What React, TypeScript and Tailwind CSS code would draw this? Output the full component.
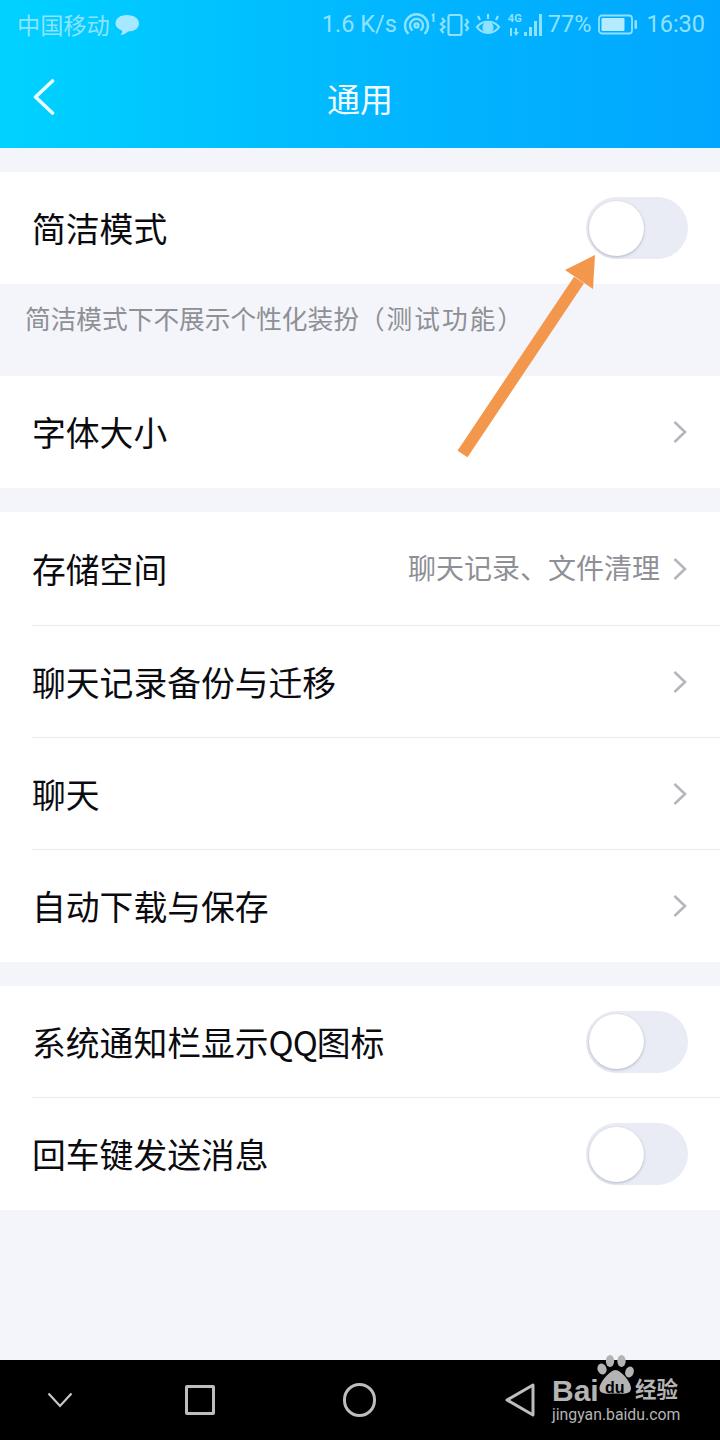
import React from "react";

function Chevron() {
  return (
    <svg width="16" height="26" viewBox="0 0 16 26" className="ml-[12px] shrink-0">
      <path d="M2.5 3 L13 13 L2.5 23" fill="none" stroke="#b4b6bd" strokeWidth="2.6" />
    </svg>
  );
}

function Toggle() {
  return (
    <div className="w-[102px] h-[62px] rounded-full bg-[#e9ecf5] flex items-center pl-[3px] shrink-0">
      <div className="w-[55px] h-[55px] rounded-full bg-white shadow-[0_1px_3px_rgba(90,95,120,0.4)]" />
    </div>
  );
}

function Row({ label, value, toggle, divider, tall }: { label: React.ReactNode; value?: string; toggle?: boolean; divider?: boolean; tall?: boolean }) {
  return (
    <div className="pl-[32px]">
      <div className={`${tall ? "h-[114px]" : "h-[112px]"} flex items-center justify-between pr-[32px] ${divider ? "border-b border-[#e9e9ee]" : ""}`}>
        <span className="text-[33.8px] text-[#0b0b0f] leading-none whitespace-nowrap">{label}</span>
        {toggle ? (
          <Toggle />
        ) : (
          <div className="flex items-center">
            {value && <span className="text-[28px] text-[#8e9096] leading-none whitespace-nowrap mb-[3px]">{value}</span>}
            <Chevron />
          </div>
        )}
      </div>
    </div>
  );
}

function StatusBar() {
  return (
    <div className="h-[50px] flex items-center justify-between pl-[17px] pr-[15px] text-[#8fe2ff] text-[23.5px] leading-none">
      <div className="flex items-center">
        <span className="text-[23.200px] whitespace-nowrap">中国移动</span>
        <svg width="26" height="24" viewBox="0 0 26 24" className="ml-[4px]">
          <path d="M13 2 C20 2 25 5.5 25 10.5 C25 15.5 20 18.5 14 18.5 C12 20.5 9 22 6.5 22 C8 20.5 8.5 18.5 8 17.5 C4 16 1.5 13.5 1.5 10.5 C1.5 5.5 6 2 13 2 Z" fill="#a6e8ff" />
        </svg>
      </div>
      <div className="flex items-center font-['Roboto','Noto_Sans',sans-serif]">
        <span className="whitespace-nowrap">1.6 K/s</span>
        <svg width="36" height="30" viewBox="0 0 36 30" className="ml-[6px]" fill="none" stroke="#8fe2ff" strokeWidth="2.4">
          <path d="M5.500 24 A11.500 11.500 0 1 1 21.500 24" />
          <path d="M9.500 20.500 A6.500 6.500 0 1 1 17.500 20.500" />
          <circle cx="13.500" cy="15.500" r="2" />
          <path d="M28.800 5.500 L30.500 4.500 V12" strokeWidth="2" />
        </svg>
        <svg width="32" height="30" viewBox="0 0 32 30" fill="none" stroke="#8fe2ff" strokeWidth="2.200">
          <rect x="9.500" y="5" width="13" height="20" rx="2" />
          <path d="M3 8 L5.500 11 L2 14 L5.500 17 L2 20 L4.500 23" />
          <path d="M27 9 L29 12 L26.500 15 L29 18 L27 21" />
        </svg>
        <svg width="26" height="24" viewBox="0 0 26 24" className="ml-[4px]" fill="none" stroke="#8fe2ff" strokeWidth="2.200">
          <path d="M2 14 C7 7 19 7 24 14 C19 22 7 22 2 14 Z" />
          <circle cx="13" cy="14.500" r="4.500" fill="#8fe2ff" />
          <path d="M5 7 L3 3 M13 6 V1 M21 7 L23 3" />
        </svg>
        <div className="relative w-[38px] h-[26px] ml-[6px]">
          <span className="absolute left-[1px] top-[1px] text-[11px] font-bold leading-none">4G</span>
          <svg width="38" height="26" viewBox="0 0 38 26" className="absolute left-0 top-0" fill="#8fe2ff">
            <rect x="3" y="16" width="2" height="8" />
            <path d="M8 16 H10 V20 H12 L9 24 L6.500 20 H8 Z" />
            <rect x="17" y="20" width="3" height="4" />
            <rect x="22" y="15" width="3" height="9" />
            <rect x="27" y="9" width="3" height="15" />
            <rect x="32" y="2" width="3" height="22" />
          </svg>
        </div>
        <span className="ml-[3px] whitespace-nowrap">77%</span>
        <svg width="40" height="22" viewBox="0 0 40 22" className="ml-[7px]">
          <rect x="1" y="1.500" width="33" height="18" rx="3" fill="none" stroke="#8fe2ff" strokeWidth="1.800" />
          <rect x="3.500" y="4" width="23" height="13" rx="1" fill="#b4ebff" />
          <rect x="36.500" y="6" width="2.500" height="9" rx="1" fill="#8fe2ff" />
        </svg>
        <span className="ml-[8px] whitespace-nowrap">16:30</span>
      </div>
    </div>
  );
}

export default function App() {
  return (
    <div className="relative w-[720px] h-[1440px] flex flex-col overflow-hidden bg-[#f4f5fa] font-['Noto_Sans_CJK_SC','Noto_Sans',sans-serif]">
      <header className="h-[148px] shrink-0 bg-gradient-to-r from-[#00d2ff] via-[#02b8ff] to-[#02a6fe]">
        <StatusBar />
        <div className="relative h-[98px] flex items-center justify-center">
          <svg width="24" height="38" viewBox="0 0 24 38" className="absolute left-[33px] top-[28px]">
            <path d="M19.500 3 L2.500 19 L19.500 35" fill="none" stroke="#e8fbff" strokeWidth="3.600" strokeLinecap="round" strokeLinejoin="round" />
          </svg>
          <h1 className="text-[33px] text-[#f2fcff] leading-none mb-[2px] font-normal">通用</h1>
        </div>
      </header>

      <section className="mt-[24px] bg-white">
        <Row label="简洁模式" toggle />
      </section>
      <p className="h-[92px] pl-[25px] pt-[19px] text-[25.700px] leading-[30px] text-[#8e9096] whitespace-nowrap">
        简洁模式下不展示个性化装扮
        <span className="font-['Noto_Sans_CJK_TC',sans-serif] tracking-[2px]">（测试功能）</span>
      </p>

      <section className="bg-white">
        <Row label="字体大小" />
      </section>

      <section className="mt-[24px] bg-white">
        <Row label="存储空间" value="聊天记录、文件清理" divider tall />
        <Row label="聊天记录备份与迁移" divider />
        <Row label="聊天" divider />
        <Row label="自动下载与保存" />
      </section>

      <section className="mt-[24px] bg-white">
        <Row label={<>系统通知栏显示<span className="tracking-[-1px]">QQ</span>图标</>} toggle divider />
        <Row label="回车键发送消息" toggle />
      </section>

      <div className="flex-1" />

      <nav className="h-[80px] shrink-0 bg-black flex items-center relative">
        <svg width="26" height="16" viewBox="0 0 26 16" className="absolute left-[47px] top-[32px]">
          <path d="M1.500 1.500 L13 14 L24.500 1.500" fill="none" stroke="#c8c8c8" strokeWidth="2.200" />
        </svg>
        <div className="absolute left-[185px] top-[25px] w-[30px] h-[30px] border-[3px] border-[#bdbdbd] rounded-[2px]" />
        <div className="absolute left-[343px] top-[23px] w-[33px] h-[34px] border-[3px] border-[#bdbdbd] rounded-full" />
        <svg width="32" height="36" viewBox="0 0 32 36" className="absolute left-[504px] top-[22px]">
          <path d="M29 3 V33 L3 18 Z" fill="none" stroke="#bdbdbd" strokeWidth="3" strokeLinejoin="round" />
        </svg>
        <div className="absolute left-[552px] top-[-5px] w-[130px] h-[70px] text-[#b4b4b4]">
          <svg width="40" height="46" viewBox="0 0 40 46" className="absolute left-[44px] top-[0px]" fill="#b4b4b4">
            <ellipse cx="14" cy="6" rx="4.200" ry="6" />
            <ellipse cx="25.500" cy="6" rx="4.200" ry="6" />
            <ellipse cx="6" cy="14" rx="4.500" ry="5.500" transform="rotate(-20 6 14)" />
            <ellipse cx="33.500" cy="17" rx="4.200" ry="5.500" transform="rotate(20 33.500 17)" />
            <path d="M19.500 15 C25 15 36 28 35 34 C34 40 26 38.500 19.500 38.500 C13 38.500 4 40 3.500 34 C3 28 14 15 19.500 15 Z" />
          </svg>
          <span className="absolute left-0 top-[21px] text-[30px] h-[30px] font-bold leading-none font-['Liberation_Sans',sans-serif]">Bai</span>
          <span className="absolute left-[53px] top-[25px] text-[16px] font-bold leading-none text-black font-['Liberation_Sans',sans-serif]">du</span>
          <span className="absolute left-[83px] top-[22px] text-[21.500px] leading-none whitespace-nowrap font-bold">经验</span>
          <span className="absolute left-0 top-[52px] text-[15.800px] leading-none whitespace-nowrap font-['Roboto',sans-serif]">jingyan.baidu.com</span>
        </div>
      </nav>

      <svg width="160" height="210" viewBox="0 0 160 210" className="absolute left-[450px] top-[250px]">
        <path d="M12.500 204 L129 30" stroke="#f2974c" strokeWidth="12" fill="none" />
        <path d="M145 5 L143 39 L115 20 Z" fill="#f2974c" />
      </svg>
    </div>
  );
}
